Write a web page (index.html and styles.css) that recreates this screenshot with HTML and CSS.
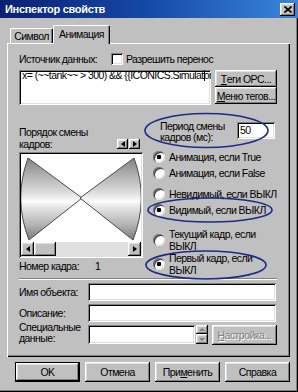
FILE: index.html
```html
<!DOCTYPE html>
<html>
<head>
  <meta charset="utf-8">
  <title>Инспектор свойств</title>
  <link rel="stylesheet" href="styles.css">
</head>
<body>
  <div class="window">
    <div class="titlebar">
      <span class="title">Инспектор свойств</span>
      <span class="close raised">
        <svg width="8" height="7" viewBox="0 0 8 7"><path d="M0.5 0.5 L7.5 6.5 M7.5 0.5 L0.5 6.5" stroke="#000" stroke-width="1.6"/></svg>
      </span>
    </div>

    <div class="tabs">
      <div class="tab">Символ</div>
      <div class="tab active">Анимация</div>
    </div>

    <div class="panel">
      <div class="src-row">
        <span class="src-label">Источник данных:</span>
        <span class="check sunken"></span>
        <span>Разрешить перенос</span>
      </div>

      <div class="src-body">
        <div class="expr sunken">x= (~~tank~~ &gt; 300) &amp;&amp; {{ICONICS.Simulat<span class="caret"></span>or</div>
        <div class="tag-buttons">
          <div class="btn raised"><u>Т</u>еги OPC...</div>
          <div class="btn raised"><u>М</u>еню тегов...</div>
        </div>
      </div>

      <div class="mid">
        <div class="frames">
          <div class="order-head">
            <span>Порядок смены<br>кадров:</span>
            <div class="step">
              <span class="mini-btn raised"><i class="tri left"></i></span>
              <span class="mini-btn raised"><i class="tri right"></i></span>
            </div>
          </div>
          <div class="preview sunken">
            <svg class="bowtie" width="120" height="88" viewBox="0 0 120 88">
              <defs>
                <linearGradient id="metal" gradientUnits="userSpaceOnUse" x1="0" y1="0" x2="0" y2="88">
                  <stop offset="0" stop-color="#767676"/>
                  <stop offset="0.22" stop-color="#acacac"/>
                  <stop offset="0.42" stop-color="#d8d8d8"/>
                  <stop offset="0.54" stop-color="#fcfcfc"/>
                  <stop offset="0.6" stop-color="#e6e6e6"/>
                  <stop offset="0.8" stop-color="#b4b4b4"/>
                  <stop offset="1" stop-color="#747474"/>
                </linearGradient>
              </defs>
              <path d="M7 4 Q-8 45 8 86 L61 44 Z" fill="url(#metal)" stroke="#4a4a4a" stroke-width="1"/>
              <path d="M113 4 Q128 45 112 86 L59 44 Z" fill="url(#metal)" stroke="#4a4a4a" stroke-width="1"/>
            </svg>
            <div class="hscroll">
              <span class="sb-btn raised"><i class="tri left"></i></span>
              <span class="sb-thumb raised"></span>
              <span class="sb-track"></span>
              <span class="sb-btn raised"><i class="tri right"></i></span>
            </div>
          </div>
          <div class="frame-no">
            <span class="frame-label">Номер кадра:</span>
            <span>1</span>
          </div>
        </div>

        <div class="options">
          <div class="period">
            <span>Период смены<br>кадров (мс):</span>
            <div class="period-input sunken">50</div>
          </div>
          <div class="radios">
            <div class="radio on"><span class="dot"></span>Анимация, если True</div>
            <div class="radio"><span class="dot"></span>Анимация, если False</div>
            <div class="radio gap-s"><span class="dot"></span>Невидимый, если ВЫКЛ</div>
            <div class="radio on"><span class="dot"></span>Видимый, если ВЫКЛ</div>
            <div class="radio two gap-l"><span class="dot"></span>Текущий кадр, если<br>ВЫКЛ</div>
            <div class="radio two on"><span class="dot"></span>Первый кадр, если<br>ВЫКЛ</div>
          </div>
        </div>
      </div>

      <div class="sep"></div>

      <div class="fields">
        <span>Имя объекта:</span>
        <div class="field sunken"></div>
        <span>Описание:</span>
        <div class="field sunken"></div>
        <span class="two-line">Специальные<br>данные:</span>
        <div class="special">
          <div class="field sunken"></div>
          <div class="spin">
            <span class="spin-btn raised"><i class="tri up"></i></span>
            <span class="spin-btn raised"><i class="tri down"></i></span>
          </div>
          <div class="btn raised disabled"><u>Н</u>астройка...</div>
        </div>
      </div>
    </div>

    <div class="actions">
      <div class="btn raised default">OK</div>
      <div class="btn raised">Отмена</div>
      <div class="btn raised">При<u>м</u>енить</div>
      <div class="btn raised">Справка</div>
    </div>

    <!-- hand-drawn annotation marks over the dialog -->
    <svg class="marks" width="298" height="392" viewBox="0 0 298 392">
      <ellipse cx="206.5" cy="130.5" rx="61.5" ry="17" />
      <ellipse cx="210" cy="210" rx="62" ry="12" />
      <ellipse cx="206" cy="265" rx="60" ry="14" />
    </svg>
  </div>
</body>
</html>
```

FILE: styles.css
```css
*, *:before, *:after { box-sizing: border-box; }
html, body { margin: 0; padding: 0; }
body {
  width: 298px;
  height: 392px;
  overflow: hidden;
  background: #c0c0c0;
  color: #000;
  font: 10.5px "Liberation Sans", Arial, sans-serif;
  letter-spacing: -0.55px;
  line-height: 12px;
}

/* bevels */
.raised {
  background: #c0c0c0;
  box-shadow: inset -1px -1px #000, inset 1px 1px #fff, inset -2px -2px #808080, inset 2px 2px #dfdfdf;
}
.sunken {
  background: #fff;
  box-shadow: inset 1px 1px #808080, inset -1px -1px #fff, inset 2px 2px #000, inset -2px -2px #dfdfdf;
}

.window {
  position: relative;
  width: 298px;
  height: 392px;
  box-shadow: inset -1px -1px #000, inset -2px -2px #808080;
}

/* title bar */
.titlebar {
  height: 18px;
  display: flex;
  align-items: center;
  padding: 0 3px 0 5px;
  background: linear-gradient(90deg, #0a1f74 0%, #154aa8 50%, #3a86dc 100%);
  color: #fff;
  font-size: 11px;
  font-weight: bold;
  letter-spacing: -0.3px;
}
.close {
  margin-left: auto;
  width: 15px;
  height: 13px;
  display: flex;
  align-items: center;
  justify-content: center;
}
.close svg { display: block; }

/* tabs */
.tabs {
  height: 25px;
  display: flex;
  align-items: flex-end;
  padding-left: 10px;
}
.tab {
  width: 43px;
  height: 15px;
  display: flex;
  align-items: center;
  justify-content: center;
  border-top: 1px solid #fff;
  border-left: 1px solid #fff;
  border-right: 1px solid #000;
  border-radius: 2px 2px 0 0;
  box-shadow: inset -1px 0 #808080;
}
.tab.active {
  position: relative;
  z-index: 1;
  width: 57px;
  height: 19px;
  margin-bottom: -1px;
  padding-bottom: 2px;
  background: #c0c0c0;
}

/* property page */
.panel {
  margin-left: 7px;
  width: 283px;
  height: 314px;
  border-top: 1px solid #fff;
  border-left: 1px solid #fff;
  box-shadow: inset -1px -1px #000, inset -2px -2px #808080;
  padding: 9px 13px 0 11px;
}

.src-row { display: flex; align-items: center; height: 12px; }
.src-label { width: 92px; }
.check { width: 12px; height: 12px; margin-right: 3px; }

.src-body { display: flex; gap: 4px; margin-top: 5px; height: 35px; }
.expr {
  width: 192px;
  height: 35px;
  padding: 0 3px;
  white-space: nowrap;
  overflow: hidden;
  line-height: 9px;
}
.caret {
  display: inline-block;
  width: 1px;
  height: 11px;
  margin-right: -1px;
  background: #000;
  vertical-align: -2px;
}
.tag-buttons { display: flex; flex-direction: column; width: 62px; }

.btn {
  display: flex;
  align-items: center;
  justify-content: center;
  height: 17px;
  white-space: nowrap;
}
.btn.disabled { color: #808080; text-shadow: 1px 1px #fff; }
.btn.default { border: 1px solid #000; }

/* animation area */
.mid {
  display: grid;
  grid-template-columns: 124px 124px;
  column-gap: 10px;
  margin-top: 16px;
}
.frames { margin-top: 5px; }
.order-head { display: flex; justify-content: space-between; align-items: flex-end; }
.step { display: flex; gap: 1px; margin: 0 3px 1px 0; }
.mini-btn { width: 11px; height: 10px; display: flex; align-items: center; justify-content: center; }

.tri { display: block; width: 0; height: 0; border: solid transparent; }
.tri.left { border-width: 3px 4px 3px 0; border-right-color: #000; }
.tri.right { border-width: 3px 0 3px 4px; border-left-color: #000; }
.tri.up { border-width: 0 3px 3px 3px; border-bottom-color: #808080; }
.tri.down { border-width: 3px 3px 0 3px; border-top-color: #808080; }

.preview {
  margin-top: 2px;
  height: 106px;
  padding: 2px;
  display: flex;
  flex-direction: column;
}
.bowtie { display: block; }
.hscroll { display: flex; height: 14px; margin-top: auto; }
.sb-btn { width: 13px; display: flex; align-items: center; justify-content: center; }
.sb-thumb { width: 22px; }
.sb-track { flex: 1; background: #e0e0e0; }

.frame-no { display: flex; margin-top: 2px; }
.frame-label { width: 76px; }

.period { display: flex; line-height: 11px; padding-left: 7px; }
.period-input {
  width: 38px;
  height: 17px;
  margin: 1px 2px 0 auto;
  padding-left: 3px;
  line-height: 17px;
}

.radios { margin-top: 6px; }
.radio { display: flex; align-items: center; gap: 4px; height: 16px; white-space: nowrap; }
.radio.two { height: 24px; }
.radio.gap-s { margin-top: 5px; }
.radio.gap-l { margin-top: 10px; }
.dot {
  flex: none;
  width: 12px;
  height: 12px;
  border-radius: 50%;
  background: #fff;
  box-shadow: inset 1px 1px #808080, inset 2px 2px #404040, inset -1px -1px #dfdfdf;
}
.radio.on .dot { background: radial-gradient(circle, #000 0 2px, #fff 2.6px); }

.sep {
  margin-top: 2px;
  height: 2px;
  border-top: 1px solid #808080;
  border-bottom: 1px solid #fff;
}

.fields {
  display: grid;
  grid-template-columns: 69px 1fr;
  grid-template-rows: 18px 18px 19px;
  row-gap: 3px;
  margin-top: 3px;
  align-items: center;
  line-height: 11px;
}
.field { height: 100%; margin-right: 1px; }
.two-line { align-self: start; margin-top: -3px; }
.special { display: flex; height: 19px; }
.special .field { flex: 0 0 107px; }
.spin { display: flex; flex-direction: column; width: 12px; }
.spin-btn { height: 9px; display: flex; align-items: center; justify-content: center; }
.spin-btn + .spin-btn { height: 10px; }
.special .btn { width: 65px; height: 20px; margin-left: 4px; }

/* dialog buttons */
.actions { display: flex; gap: 5px; margin-top: 5px; padding-left: 15px; }
.actions .btn { width: 65px; height: 20px; }

.marks {
  position: absolute;
  left: 0;
  top: 0;
  pointer-events: none;
}
.marks ellipse { fill: none; stroke: #1c2a88; stroke-width: 1.6; }
```
